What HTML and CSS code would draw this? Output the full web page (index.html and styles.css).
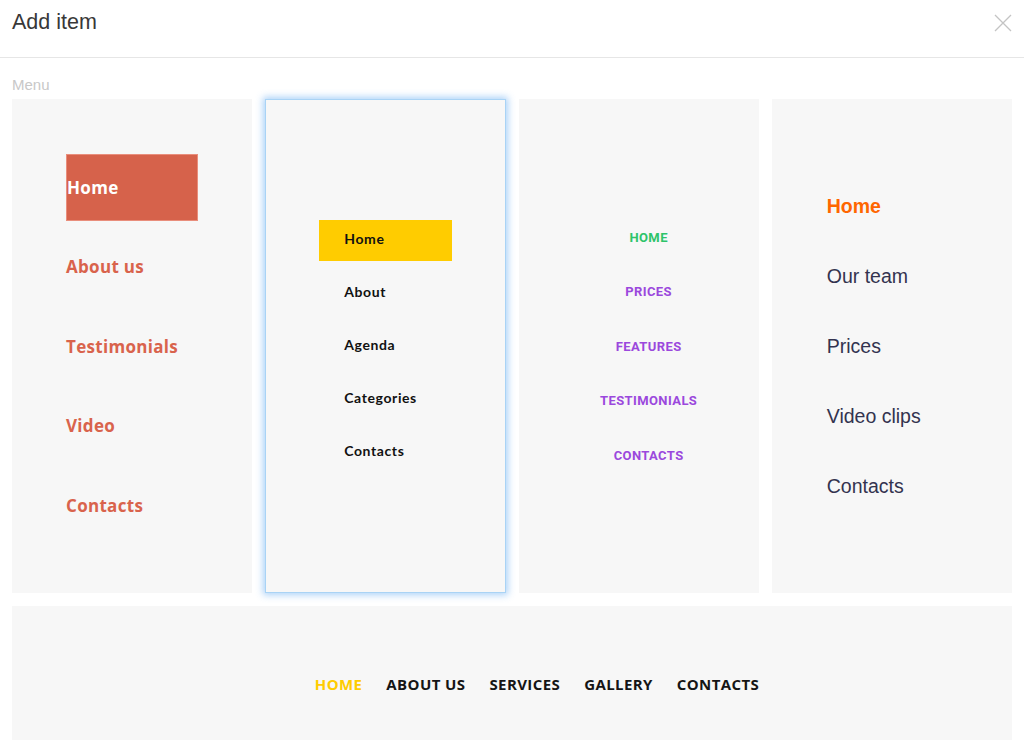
FILE: index.html
```html
<!DOCTYPE html>
<html lang="en">
<head>
  <meta charset="UTF-8" />
  <meta name="viewport" content="width=device-width, initial-scale=1.0" />
  <title>Add item</title>
  <link rel="stylesheet" href="styles.css">
</head>
<body>

<!-- Dialog Header -->
<header class="dialog-header">
  <h1>Add item</h1>
  <button class="close-btn" aria-label="Close">
    <svg width="18" height="18" viewBox="0 0 18 18">
      <path d="M1 1 L17 17 M17 1 L1 17" stroke="#c4c4c4" stroke-width="1.3" fill="none" />
    </svg>
  </button>
</header>

<div class="dialog-body">
  <p class="section-label">Menu</p>

  <!-- Menu Templates -->
  <div class="menu-grid">
    <div class="menu-card menu-coral">
      <ul>
        <li><span class="active">Home</span></li>
        <li><span>About us</span></li>
        <li><span>Testimonials</span></li>
        <li><span>Video</span></li>
        <li><span>Contacts</span></li>
      </ul>
    </div>

    <div class="menu-card menu-yellow selected">
      <ul>
        <li><span class="active">Home</span></li>
        <li><span>About</span></li>
        <li><span>Agenda</span></li>
        <li><span>Categories</span></li>
        <li><span>Contacts</span></li>
      </ul>
    </div>

    <div class="menu-card menu-caps">
      <ul>
        <li><span class="active">HOME</span></li>
        <li><span>PRICES</span></li>
        <li><span>FEATURES</span></li>
        <li><span>TESTIMONIALS</span></li>
        <li><span>CONTACTS</span></li>
      </ul>
    </div>

    <div class="menu-card menu-plain">
      <ul>
        <li><span class="active">Home</span></li>
        <li><span>Our team</span></li>
        <li><span>Prices</span></li>
        <li><span>Video clips</span></li>
        <li><span>Contacts</span></li>
      </ul>
    </div>
  </div>

  <!-- Horizontal Menu -->
  <div class="menu-bar">
    <span class="active">HOME</span>
    <span>ABOUT US</span>
    <span>SERVICES</span>
    <span>GALLERY</span>
    <span>CONTACTS</span>
  </div>
</div>

</body>
</html>
```

FILE: styles.css
```css
/* General Styling */
body {
  margin: 0;
  font-family: 'Liberation Sans', Arial, sans-serif;
  background-color: #ffffff;
  color: #333333;
  overflow: hidden;
}

/* Header */
.dialog-header {
  height: 57px;
  border-bottom: 1px solid #e6e6e6;
  display: flex;
  align-items: center;
  justify-content: space-between;
  padding: 0 12px;
}

.dialog-header h1 {
  margin: 0 0 12px 0;
  font-size: 21.5px;
  font-weight: 400;
  color: #383838;
}

.close-btn {
  background: none;
  border: none;
  padding: 0;
  margin: 0 0 12px 0;
  cursor: pointer;
  display: flex;
}

/* Body */
.dialog-body {
  padding: 0 12px;
}

.section-label {
  margin: 0 0 6px 0;
  padding-top: 19px;
  font-size: 15px;
  line-height: 16px;
  color: #c8c8c8;
}

.menu-grid {
  display: grid;
  grid-template-columns: repeat(4, 1fr);
  gap: 13px;
  margin-bottom: 13px;
}

.menu-card {
  background-color: #f7f7f7;
  height: 494px;
  box-sizing: border-box;
  display: flex;
  flex-direction: column;
  justify-content: center;
}

.menu-card ul {
  list-style: none;
  margin: 0;
  padding: 0;
}

.menu-card li {
  display: flex;
  align-items: center;
}

.menu-card.selected {
  border: 1px solid #a9d3f5;
  box-shadow: 0 0 7px 2px rgba(70, 155, 240, 0.45);
}

/* Coral menu */
.menu-coral ul {
  padding-left: 54px;
}

.menu-coral li {
  height: 79.5px;
  font-family: 'Open Sans', sans-serif;
  font-weight: 700;
  font-size: 17px;
  letter-spacing: 0.3px;
  color: #d9634c;
}

.menu-coral .active {
  display: flex;
  align-items: center;
  width: 132px;
  height: 67px;
  box-sizing: border-box;
  border: 1px solid #e98e7c;
  background-color: #d6624b;
  color: #ffffff;
}

/* Yellow menu */
.menu-yellow ul {
  padding-left: 53px;
}

.menu-yellow li {
  height: 53px;
  font-family: Lato, sans-serif;
  font-weight: 700;
  font-size: 14px;
  letter-spacing: 0.6px;
  color: #111111;
}

.menu-yellow li span {
  padding-left: 25px;
  padding-bottom: 3px;
}

.menu-yellow .active {
  display: flex;
  align-items: center;
  width: 133px;
  height: 41px;
  box-sizing: border-box;
  background-color: #ffcc00;
}

/* Caps menu */
.menu-caps ul {
  padding-left: 20px;
}

.menu-caps li {
  height: 54.5px;
  justify-content: center;
  font-family: Roboto, sans-serif;
  font-weight: 700;
  font-size: 13px;
  letter-spacing: 0.4px;
  color: #9b48dd;
}

.menu-caps .active {
  color: #2ec46a;
}

/* Plain menu */
.menu-plain ul {
  padding-left: 55px;
}

.menu-plain li {
  height: 70px;
  font-size: 19.5px;
  color: #33334f;
}

.menu-plain .active {
  font-weight: 700;
  color: #ff6600;
}

/* Horizontal bar */
.menu-bar {
  background-color: #f7f7f7;
  height: 156px;
  display: flex;
  align-items: center;
  justify-content: center;
  gap: 24px;
  padding-left: 50px;
  font-family: 'Open Sans', sans-serif;
  font-weight: 700;
  font-size: 15px;
  letter-spacing: 0.4px;
  color: #151515;
}

.menu-bar .active {
  color: #ffcc00;
}
```
